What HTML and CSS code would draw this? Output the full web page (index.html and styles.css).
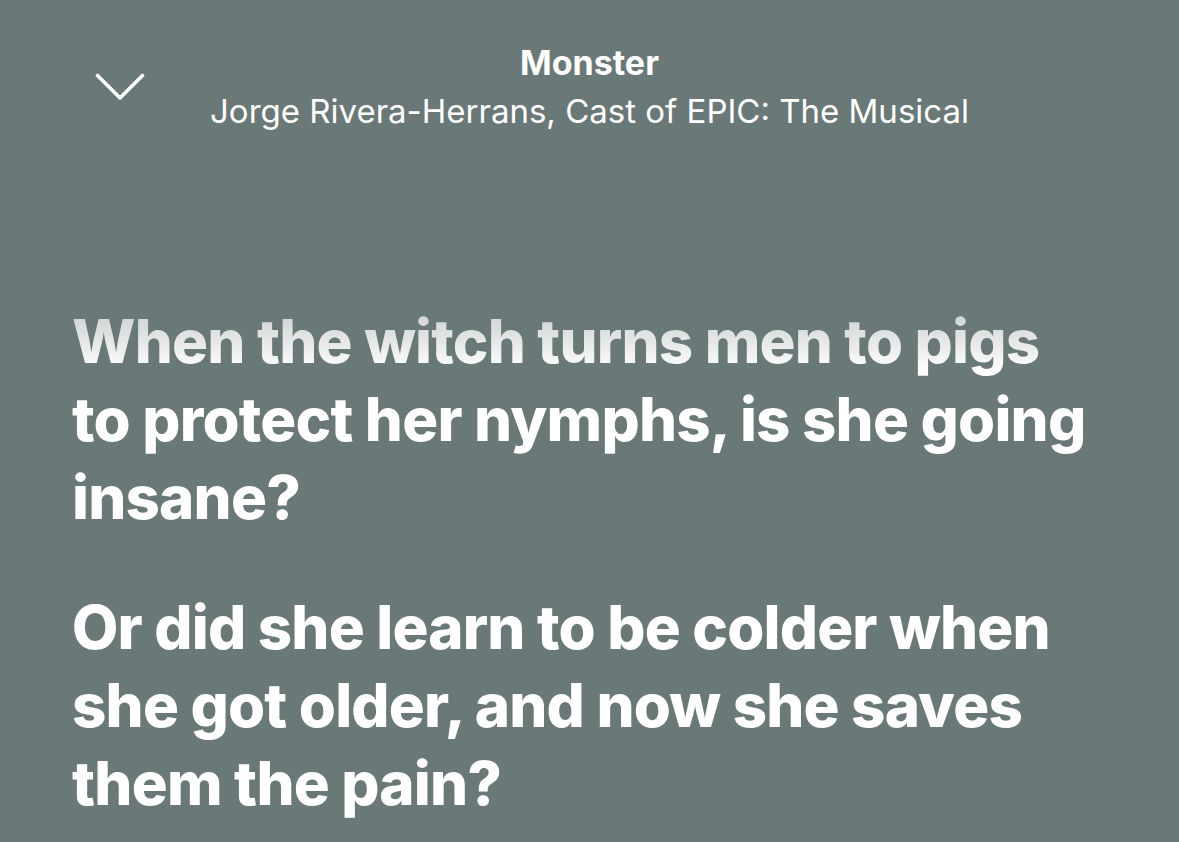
FILE: index.html
```html
<!doctype html>
<html lang="en">
<head>
    <meta charset="utf-8">
    <title>Monster - Lyrics</title>
    <link rel="stylesheet" href="styles.css">
</head>
<body>
    <header class="now-playing">
        <button class="collapse" aria-label="Close lyrics">
            <svg width="50" height="28" viewBox="0 0 50 28">
                <path d="M2.5 2.5 L25 25 L47.5 2.5" fill="none" stroke="#fff" stroke-width="3.6" stroke-linecap="round" stroke-linejoin="round"/>
            </svg>
        </button>
        <div class="track">
            <div class="track-title">Monster</div>
            <div class="track-artist">Jorge Rivera-Herrans, Cast of EPIC: The Musical</div>
        </div>
    </header>

    <main class="lyrics">
        <p class="line line-past">When the witch turns men to pigs to protect her nymphs, is she going insane?</p>
        <p class="line">Or did she learn to be colder when she got older, and now she saves them the pain?</p>
    </main>
</body>
</html>
```

FILE: styles.css
```css
* {
    box-sizing: border-box;
}
html, body {
    height: 100%;
}
body {
    margin: 0;
    background-color: #6a7877;
    color: #fff;
    font-family: "Inter", "Liberation Sans", sans-serif;
    overflow: hidden;
}
.now-playing {
    position: relative;
    display: flex;
    justify-content: center;
    padding-top: 42px;
}
.collapse {
    position: absolute;
    left: 95px;
    top: 73px;
    padding: 0;
    border: 0;
    background: none;
}
.collapse svg {
    display: block;
}
.track {
    text-align: center;
}
.track-title {
    font-weight: 700;
    font-size: 34px;
    line-height: 42px;
}
.track-artist {
    font-size: 33px;
    line-height: 42px;
    margin-top: 6px;
}
.lyrics {
    padding: 170px 83px 0 72px;
}
.line {
    margin: 0 0 52px 0;
    font-weight: 800;
    font-size: 60px;
    line-height: 78px;
    letter-spacing: -0.8px;
}
.line-past {
    background: linear-gradient(to bottom, #c5caca 0px, #ffffff 70px);
    -webkit-background-clip: text;
    background-clip: text;
    color: transparent;
}
```
